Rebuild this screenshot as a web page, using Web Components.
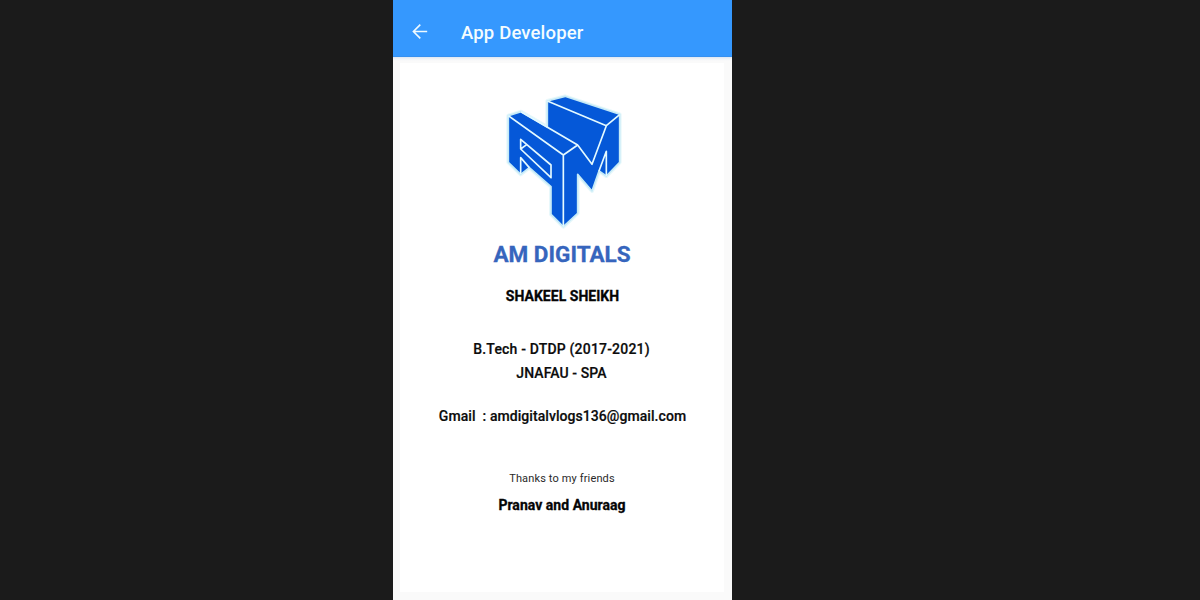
<!DOCTYPE html>
<html lang="en"><head><meta charset="utf-8"><title>App Developer</title>
<style>body{margin:0;background:#1b1b1b;font-family:Roboto,sans-serif}</style></head>
<body><about-screen></about-screen>
<script>
class AppHeader extends HTMLElement{constructor(){super();this.attachShadow({mode:'open'}).innerHTML=`
<style>:host{display:flex;align-items:center;box-sizing:border-box;height:57px;padding:7px 0 0 19px;background:#3598fe;color:#f4fcff;font-size:18.5px;font-weight:500;line-height:24px;border-bottom:1px solid #3690f0}
svg{display:block;width:16px;height:16px;margin-right:33px}span{white-space:nowrap;letter-spacing:.16px;padding-top:2px}</style>
<svg viewBox="0 0 16 16" fill="none" stroke="#effaff" stroke-width="1.6"><path d="M15.2 7.5H1.5M8.3.6 1.4 7.5l6.9 6.9"/></svg><span><slot></slot></span>`}}
class AmLogo extends HTMLElement{constructor(){super();this.attachShadow({mode:'open'}).innerHTML=`
<style>:host{display:block;width:140px;height:150px}svg{display:block;width:100%;height:100%}</style>
<svg viewBox="0 0 420 450" stroke-linejoin="round">
<path fill="none" stroke="#e8f8fb" stroke-width="12" d="M157 48 210 34 374 88V232L334 273 312 258 291 318 248 268V385L205 425 168 388V305L103 248 77 268 40 232V92L78 80 157 126Z"/>
<path fill="#0558d8" stroke="#c5eaf7" stroke-width="5" d="M157 48 210 34 374 88V232L334 273 312 258 291 318 248 268V385L205 425 168 388V305L103 248 77 268 40 232V92L78 80 157 126Z"/>
<g fill="none" stroke="#e4faff" stroke-width="5">
<path d="M157 48 334 122 374 89M334 122 291 238 248 180 205 210V425M40 92 205 210M78 80 248 180M334 273V199L312 258M77 268V218L103 248"/>
<path d="M77 163 168 240V278L77 192ZM77 192 95 179"/></g></svg>`}}
class CreditLine extends HTMLElement{constructor(){super();this.attachShadow({mode:'open'}).innerHTML=`
<style>:host{display:flex;justify-content:center;align-items:center;height:24px;white-space:pre;color:#0c0c0c;font-size:14px;font-weight:500;-webkit-text-stroke:.2px}
:host([kind=brand]){height:30px;font-size:22.5px;font-weight:700;color:#3665bd;-webkit-text-stroke:.3px}
:host([kind=name]){font-weight:700;color:#050505;letter-spacing:.03px;-webkit-text-stroke:.3px}
:host([kind=note]){font-size:11px;font-weight:400;color:#292929;-webkit-text-stroke:0}</style><span><slot></slot></span>`}}
class AboutScreen extends HTMLElement{constructor(){super();this.attachShadow({mode:'open'}).innerHTML=`
<style>:host{display:flex;flex-direction:column;box-sizing:border-box;width:339px;height:600px;margin-left:393px;background:#fafafa;overflow:hidden}
.shade{height:6px;flex:none;background:linear-gradient(#dce7f3 0,#f2f4f7 2px,#fafafa 4px)}
main{display:flex;flex-direction:column;align-items:center;height:529px;margin:0 8px 0 7px;background:#fff}
am-logo{margin:22px 0 4px 6px}.name{margin-top:15px;padding-left:1px}
.b{margin-top:29px;letter-spacing:.18px;margin-right:1px}.j{height:23px;letter-spacing:.08px;margin-right:1px}.g{margin-top:20px;letter-spacing:.06px;padding-left:1px}.t{margin-top:38px;letter-spacing:.14px}.p{margin-top:3px}
</style><app-header>App Developer</app-header><div class="shade"></div><main><am-logo></am-logo>
<credit-line kind="brand">AM DIGITALS</credit-line><credit-line class="name" kind="name">SHAKEEL SHEIKH</credit-line>
<credit-line class="b">B.Tech - DTDP (2017-2021)</credit-line><credit-line class="j">JNAFAU - SPA</credit-line>
<credit-line class="g">Gmail  : amdigitalvlogs136@gmail.com</credit-line><credit-line class="t" kind="note">Thanks to my friends</credit-line><credit-line class="p" kind="name">Pranav and Anuraag</credit-line></main>`}}
customElements.define('app-header',AppHeader);customElements.define('am-logo',AmLogo);customElements.define('credit-line',CreditLine);customElements.define('about-screen',AboutScreen);
</script></body></html>
